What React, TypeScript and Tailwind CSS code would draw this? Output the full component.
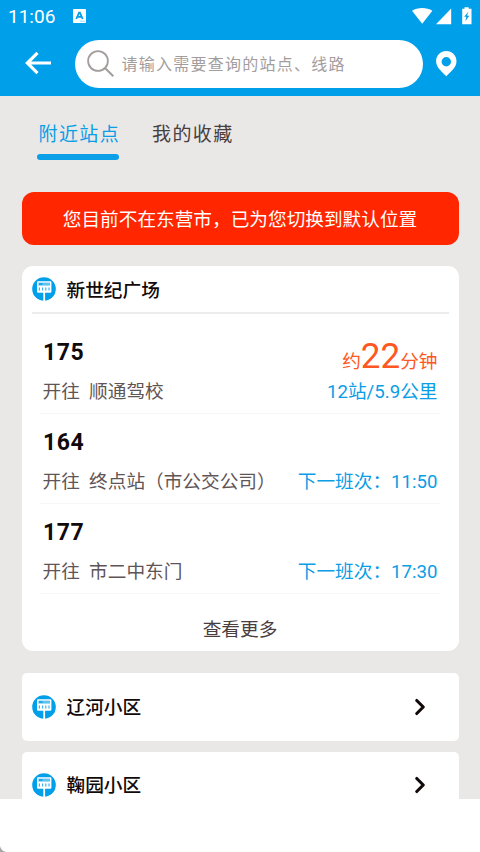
import { ChevronRight } from "lucide-react";

type Line = {
  num: string;
  dest: string;
  next?: string;
  minutes?: number;
  distance?: string;
};

const lines: Line[] = [
  { num: "175", dest: "顺通驾校", minutes: 22, distance: "12站/5.9公里" },
  { num: "164", dest: "终点站（市公交公司）", next: "11:50" },
  { num: "177", dest: "市二中东门", next: "17:30" },
];

const otherStations = ["辽河小区", "鞠园小区"];

function StationIcon() {
  return (
    <svg viewBox="0 0 24 24" className="w-6 h-6 shrink-0">
      <circle cx="12" cy="12" r="11.8" fill="#009fe9" />
      <rect x="5" y="4.3" width="14.4" height="11.4" rx="1.2" fill="#fff" />
      <rect x="6.4" y="5.6" width="11.6" height="3" fill="#5fc3f1" />
      <rect x="7" y="6.3" width="3.5" height="1.4" fill="#009fe9" />
      <path d="M7.4 10.6v3M10.6 10.6v3M13.8 10.6v3M17 10.6v3" stroke="#3db4ee" strokeWidth="1.2" />
      <path d="M12.2 15v9" stroke="#fff" strokeWidth="1.8" />
    </svg>
  );
}

function StatusBar() {
  return (
    <div className="h-8 flex items-center pl-[8px] pr-[8.5px]">
      <span className="pt-[2px] text-[19px] leading-8">11:06</span>
      <svg viewBox="0 0 13 14" className="w-[13px] h-[14px] ml-[18px]">
        <rect width="13" height="14" rx="1" fill="#fff" />
        <path d="M3.3 10 6.1 3.6h.8L9.7 10M4.3 7.9h4.4" fill="none" stroke="#009fe9" strokeWidth="1.8" />
        <path d="M7 12.2h5" stroke="#7fcff4" strokeWidth=".8" />
      </svg>
      <svg viewBox="0 0 60 18" className="w-[60px] h-[18px] ml-auto">
        <path d="M0 3.7C5.6.1 14.6.1 20.4 3.7L10.2 16.8Z" fill="#fff" />
        <path d="M39.2 1.5V17.3H24Z" fill="#fff" />
        <path d="M50.2 1.8h2.3V.2h4.2v1.6h2.8v15.4h-9.3Z" fill="#fff" />
        <path d="M56.3 4.8 52.2 9.7h2.1l-1 4.5 4-5.5h-2.2Z" fill="#009fe9" />
      </svg>
    </div>
  );
}

function SearchHeader() {
  return (
    <div className="h-16 flex items-start pt-2">
      <svg viewBox="0 0 28 24" className="w-7 h-6 ml-[23.5px] mt-[11px]">
        <path d="M27 12H3M13.5 1.8 3.3 12l10.2 10.2" fill="none" stroke="#fff" strokeWidth="3.2" />
      </svg>
      <div className="ml-[23px] w-[348.5px] h-12 rounded-full bg-white flex items-center">
        <svg viewBox="0 0 28 28" className="w-7 h-7 ml-3">
          <circle cx="11" cy="11" r="9.9" fill="none" stroke="#a39d9d" strokeWidth="1.8" />
          <path d="m18 18 8.3 8.3" stroke="#a39d9d" strokeWidth="2" />
        </svg>
        <span className="ml-[7px] pt-[2px] text-[16px] tracking-[1.25px] text-[#a39d9d] whitespace-nowrap">
          请输入需要查询的站点、线路
        </span>
      </div>
      <svg viewBox="0 0 21 26" className="w-[21px] h-[26px] ml-[12.5px] mt-[11px]">
        <path
          d="M10.3 0C4.4 0 .1 4.5.1 10.2c0 6.3 5.6 10.3 10.2 15 4.6-4.7 10.2-8.7 10.2-15C20.5 4.5 16.2 0 10.3 0Zm0 6a4.7 4.7 0 1 1 0 9.4 4.7 4.7 0 0 1 0-9.4Z"
          fill="#fff"
        />
      </svg>
    </div>
  );
}

function LineRow({ line }: { line: Line }) {
  return (
    <div className="h-[90px] ml-[18px] mr-[18px] flex justify-between border-b border-[#f7f7f7] text-[18.67px]">
      <div>
        <div className="mt-[13px] ml-[3.5px] h-8 leading-8 text-[23px] font-bold tracking-[0.6px] text-[#120a0a]">{line.num}</div>
        <div className="mt-[7px] ml-[3px] h-8 leading-8 whitespace-pre text-[#5f5556]">{"开往  " + line.dest}</div>
      </div>
      <div className="mr-[3px] text-right text-[#0b9de5]">
        <div className="mt-[17px] h-8 leading-8 text-[#ff5722] whitespace-nowrap">
          {line.minutes && (
            <>
              约<span className="text-[35px]">{line.minutes}</span>分钟
            </>
          )}
        </div>
        <div className="mt-[3px] h-8 leading-8 whitespace-nowrap">{line.next ? `下一班次：${line.next}` : line.distance}</div>
      </div>
    </div>
  );
}

export default function App() {
  return (
    <div className="w-[480px] h-[852px] overflow-hidden bg-white font-[Roboto,'Noto_Sans_CJK_SC',sans-serif]">
      <div className="h-[799px] overflow-hidden bg-[#e9e8e7]">
        <div className="h-24 bg-[#009fe9] text-white">
          <StatusBar />
          <SearchHeader />
        </div>

        {/* Tabs */}
        <div className="h-24 flex pl-[37px] pt-[24px] text-[19px] leading-[30px] tracking-[1.4px]">
          <div className="w-[82px] text-[#0b9de5]">
            <div className="pl-[1.5px] whitespace-nowrap">附近站点</div>
            <div className="mt-[4px] h-[6px] rounded-full bg-[#0b9fe8]" />
          </div>
          <div className="ml-[33px] text-[#4a3e40]">我的收藏</div>
        </div>

        <div className="mx-[21.5px] h-[53px] pt-[2px] rounded-[12px] bg-[#ff2600] flex items-center justify-center text-white text-[18.67px] whitespace-nowrap">
          您目前不在东营市，已为您切换到默认位置
        </div>

        {/* Nearest station */}
        <div className="mt-[21px] mx-[21.5px] h-[385px] rounded-[11px] bg-white">
          <div className="mx-[10px] h-[48px] flex items-center border-b-2 border-[#ececec]">
            <StationIcon />
            <span className="ml-[11px] pt-[3px] text-[18.67px] font-medium text-[#120a0a]">新世纪广场</span>
          </div>
          <div className="pt-[10px]">
            {lines.map((line) => (
              <LineRow key={line.num} line={line} />
            ))}
          </div>
          <div className="mt-[20px] text-center text-[18.67px] leading-8 text-[#4a3e40]">查看更多</div>
        </div>

        <div className="mt-[22px] mx-[21.5px] space-y-[11px]">
          {otherStations.map((name) => (
            <div key={name} className="h-[67.5px] px-[10px] rounded-[5px] bg-white flex items-center text-[#120a0a]">
              <StationIcon />
              <span className="ml-[11px] pt-[2px] text-[18.67px] font-medium">{name}</span>
              <ChevronRight className="ml-auto mr-[16px] w-[26px] h-[26px]" strokeWidth={2.9} />
            </div>
          ))}
        </div>
      </div>
      <div className="h-[53px] flex items-end">
        <svg viewBox="0 0 6 6" className="w-[6px] h-[6px]">
          <path d="M0 0Q1 5 6 6H0Z" fill="#a5a5a5" />
        </svg>
      </div>
    </div>
  );
}
